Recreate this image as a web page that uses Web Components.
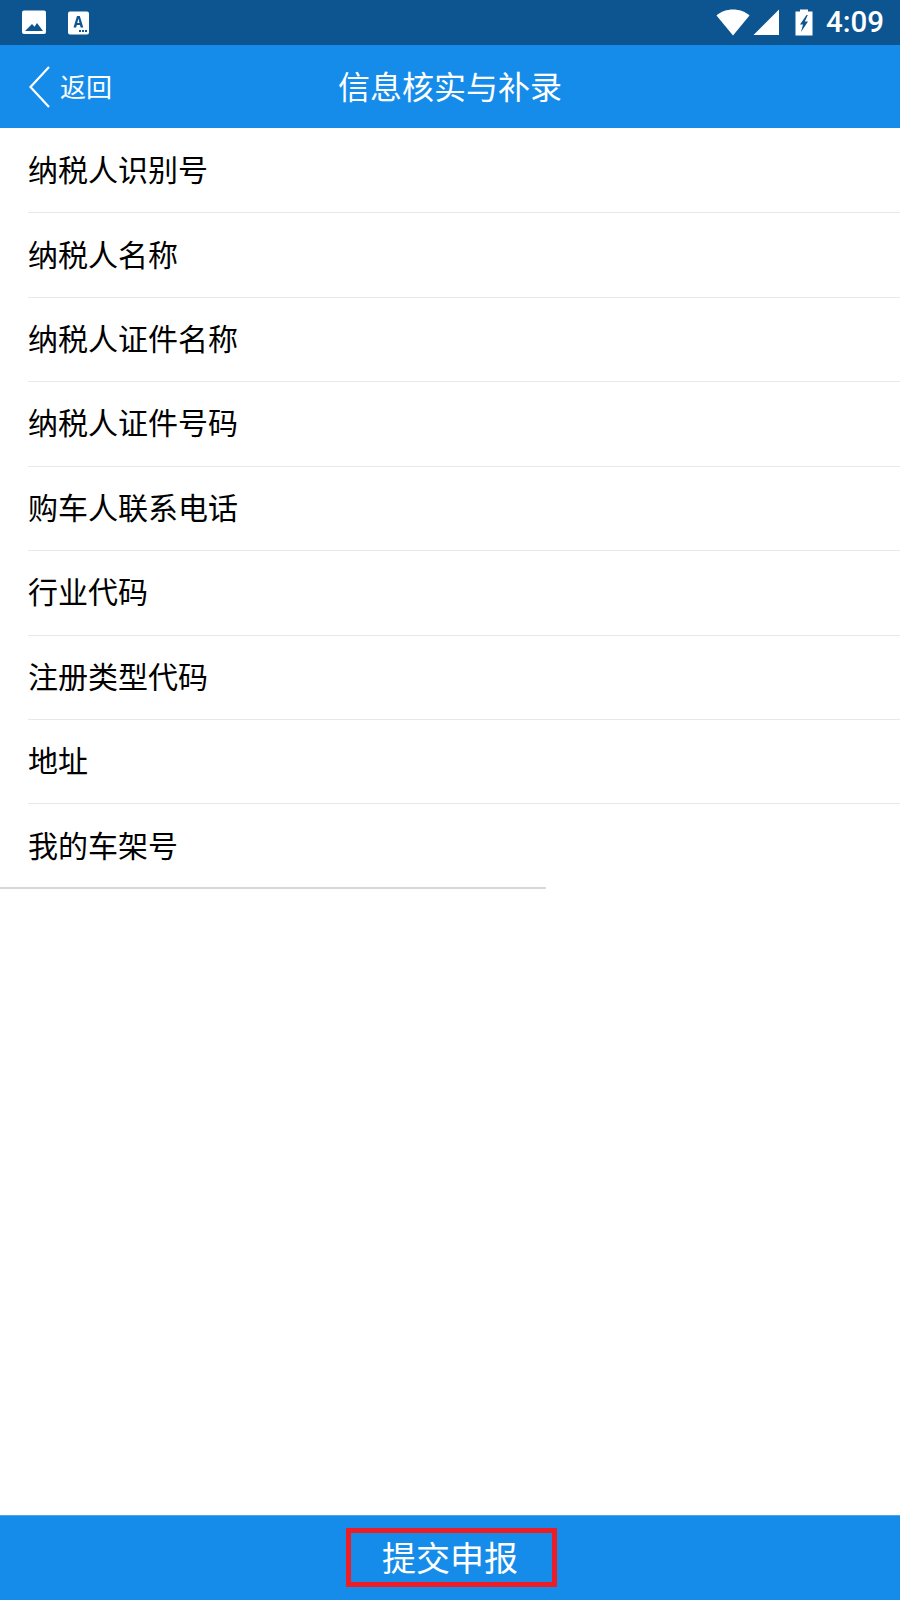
<!DOCTYPE html>
<html lang="zh">
<head>
<meta charset="utf-8">
<title>信息核实与补录</title>
<style>
    html, body {
        margin: 0;
        height: 100%;
    }
    body {
        font-family: "Noto Sans CJK SC", "Roboto", sans-serif;
        background: #fff;
    }
    app-screen {
        height: 1600px;
    }
</style>
</head>
<body>
<app-screen>
    <status-bar slot="top"></status-bar>
    <nav-header slot="top" back="返回">信息核实与补录</nav-header>
    <info-list>
        <info-row>纳税人识别号</info-row>
        <info-row>纳税人名称</info-row>
        <info-row>纳税人证件名称</info-row>
        <info-row>纳税人证件号码</info-row>
        <info-row>购车人联系电话</info-row>
        <info-row>行业代码</info-row>
        <info-row>注册类型代码</info-row>
        <info-row>地址</info-row>
        <info-row last>我的车架号</info-row>
    </info-list>
    <submit-bar slot="bottom">提交申报</submit-bar>
</app-screen>

<script>
class AppScreen extends HTMLElement {
    constructor(){
        super();
        this.attachShadow({mode: 'open'});
        this.shadowRoot.innerHTML = `
<style>
    :host {
        display: flex;
        flex-direction: column;
        width: 100%;
    }
    main {
        flex: 1;
    }
</style>
<slot name="top"></slot>
<main><slot></slot></main>
<slot name="bottom"></slot>`;
    }
}

class StatusBar extends HTMLElement {
    constructor(){
        super();
        this.attachShadow({mode: 'open'});
        this.shadowRoot.innerHTML = `
<style>
    :host {
        display: flex;
        align-items: center;
        height: 45px;
        background: #0d5591;
        color: #fff;
        padding: 0 16px 0 21px;
        box-sizing: border-box;
    }
    svg {
        display: block;
    }
    .image {
        margin-right: 20px;
    }
    .spacer {
        flex: 1;
    }
    .wifi {
        margin-right: 3px;
    }
    .signal {
        margin-right: 15px;
    }
    .battery {
        margin-right: 13px;
    }
    .time {
        font-family: "Roboto", sans-serif;
        font-size: 29.5px;
        font-weight: 500;
        line-height: 45px;
    }
</style>
<svg class="image" width="26" height="25" viewBox="0 0 26 25">
    <rect x="1" y="0.500" width="24" height="23.500" rx="2" fill="#fff"/>
    <path d="M4 21 L11 14 L13.500 16.800 L16 13 L22 21 Z" fill="#0d5591"/>
</svg>
<svg width="23" height="24" viewBox="0 0 23 24">
    <rect x="1" y="0.500" width="21" height="23" rx="2" fill="#fff"/>
    <path d="M6.500 16.500 L10 5 L12.800 5 L16.300 16.500 L13.600 16.500 L13 14 L9.800 14 L9.200 16.500 Z M10.300 12 L12.500 12 L11.400 7.500 Z" fill="#0d5591"/>
    <path d="M12 19h2v2h-2z M15 19h2v2h-2z M18 19h2v2h-2z" fill="#0d5591"/>
</svg>
<span class="spacer"></span>
<svg class="wifi" width="34" height="27" viewBox="0 0 34 27">
    <path d="M0.500 6.500 C9 -1.500 25 -1.500 33.500 6.500 L17 26.500 Z" fill="#fff"/>
</svg>
<svg class="signal" width="27" height="27" viewBox="0 0 27 27">
    <path d="M26 0.500 V26 H0.500 Z" fill="#fff"/>
</svg>
<svg class="battery" width="18" height="27" viewBox="0 0 18 27">
    <path d="M5 0.500 H13 V2.500 H17.500 V26.500 H0.500 V2.500 H5 Z" fill="#fff"/>
    <path d="M11.500 6 L5 15.500 H8 L6 23 L13 12.500 H9.800 L12.800 6 Z" fill="#0d5591"/>
</svg>
<span class="time">4:09</span>`;
    }
}

class NavHeader extends HTMLElement {
    constructor(){
        super();
        this.attachShadow({mode: 'open'});
        this.shadowRoot.innerHTML = `
<style>
    :host {
        display: grid;
        grid-template-columns: 1fr auto 1fr;
        align-items: center;
        height: 83px;
        background: #168cea;
        color: #fff;
        padding-left: 29px;
        box-sizing: border-box;
    }
    .back {
        display: flex;
        align-items: center;
        gap: 10px;
        font-size: 26px;
    }
    .back span {
        padding-bottom: 3px;
    }
    svg {
        display: block;
    }
    .title {
        font-size: 32px;
        padding: 0 29px 4px 0;
    }
</style>
<div class="back">
    <svg width="21" height="42" viewBox="0 0 21 42">
        <path d="M20 1 L1.500 21 L20 41" fill="none" stroke="#fff" stroke-width="2.200"/>
    </svg>
    <span id="back"></span>
</div>
<div class="title"><slot></slot></div>
<div></div>`;
        this.shadowRoot.getElementById('back').textContent = this.getAttribute('back');
    }
}

class InfoList extends HTMLElement {
    constructor(){
        super();
        this.attachShadow({mode: 'open'});
        this.shadowRoot.innerHTML = `
<style>
    :host {
        display: block;
        width: 100%;
        padding-top: 0.9px;
    }
    .end {
        width: 546px;
        height: 2px;
        margin-top: -1.9px;
        background: #d8d8d8;
    }
</style>
<slot></slot>
<div class="end"></div>`;
    }
}

class InfoRow extends HTMLElement {
    constructor(){
        super();
        this.attachShadow({mode: 'open'});
        this.shadowRoot.innerHTML = `
<style>
    :host {
        display: flex;
        align-items: center;
        height: 84.44px;
        margin-left: 28px;
        padding-bottom: 5px;
        box-sizing: border-box;
        border-bottom: 1px solid #e8e8e8;
        font-size: 30px;
        color: #000;
    }
    :host([last]) {
        border-bottom: 0;
    }
</style>
<slot></slot>`;
    }
}

class SubmitBar extends HTMLElement {
    constructor(){
        super();
        this.attachShadow({mode: 'open'});
        this.shadowRoot.innerHTML = `
<style>
    :host {
        display: flex;
        justify-content: center;
        align-items: center;
        height: 85px;
        padding: 0 0 1px 3px;
        box-sizing: border-box;
        background: #168cea;
        border-top: 1px solid #4ba6ef;
        color: #fff;
        font-size: 34px;
    }
    .mark {
        display: flex;
        justify-content: center;
        align-items: center;
        width: 211px;
        height: 59px;
        padding: 0 3px 3px 0;
        box-sizing: border-box;
        border: 5px solid #ee1c25;
    }
</style>
<div class="mark"><slot></slot></div>`;
    }
}

customElements.define('app-screen', AppScreen);
customElements.define('status-bar', StatusBar);
customElements.define('nav-header', NavHeader);
customElements.define('info-list', InfoList);
customElements.define('info-row', InfoRow);
customElements.define('submit-bar', SubmitBar);
</script>
</body>
</html>
